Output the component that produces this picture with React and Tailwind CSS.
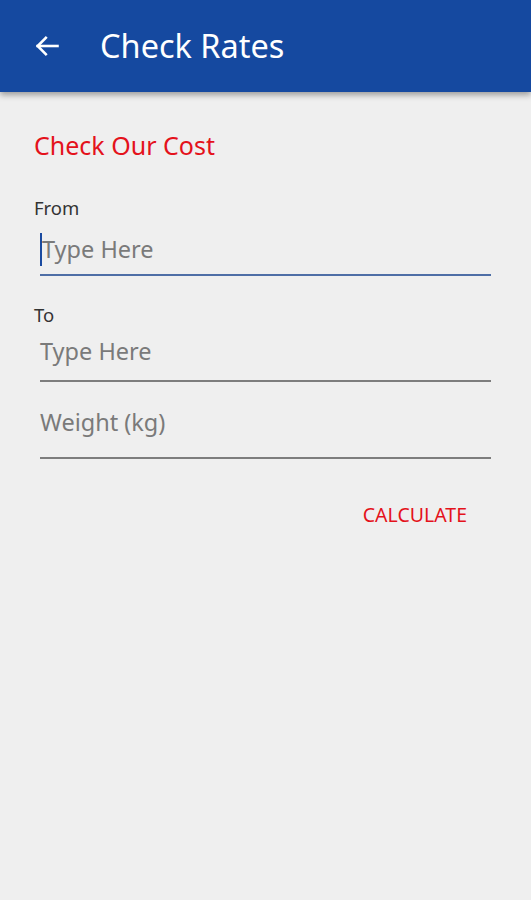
export default function App() {
  return (
    <div className="min-h-[900px] w-full bg-[#efefef]" style={{ fontFamily: "'Noto Sans', sans-serif" }}>
      <div className="relative z-10 flex h-[92px] items-center bg-[#1549a0] shadow-[0_3px_6px_rgba(0,0,0,0.35)]">
        <svg className="ml-[33px] h-[28px] w-[28px]" viewBox="0 0 24 24" fill="none" stroke="white" strokeWidth="2.2" strokeLinecap="square">
          <path d="M21 12H4" />
          <path d="M11 5l-7 7 7 7" />
        </svg>
        <div className="ml-[39px] text-[32.5px] leading-none text-white">Check Rates</div>
      </div>
      <div className="px-[34px] pt-[38px]">
        <div className="text-[25px] leading-[30px] text-[#e4121b]">Check Our Cost</div>
        <div className="mt-[37px] text-[18.5px] leading-[22px] text-[#333]">From</div>
        <div className="ml-[6px] mr-[6px] mt-[6px] flex h-[51px] items-center border-b-2 border-[#4e6ea6]">
          <div className="h-[33px] w-[2px] bg-[#1a4aa0]"></div>
          <div className="text-[23.5px] text-[#7a7a7a]">Type Here</div>
        </div>
        <div className="mt-[28px] text-[18.5px] leading-[22px] text-[#333]">To</div>
        <div className="ml-[6px] mr-[6px] mt-[8px] flex h-[48px] items-start border-b-2 border-[#7d7d7d]">
          <div className="text-[23.5px] leading-[34px] text-[#7a7a7a]">Type Here</div>
        </div>
        <div className="ml-[6px] mr-[6px] mt-[23px] flex h-[54px] items-start border-b-2 border-[#7d7d7d]">
          <div className="text-[23.5px] leading-[34px] text-[#7a7a7a]">Weight (kg)</div>
        </div>
        <div className="mt-[45px] flex justify-end pr-[30px]">
          <div className="text-[19.5px] leading-[22px] text-[#e4121b]">CALCULATE</div>
        </div>
      </div>
    </div>
  );
}
